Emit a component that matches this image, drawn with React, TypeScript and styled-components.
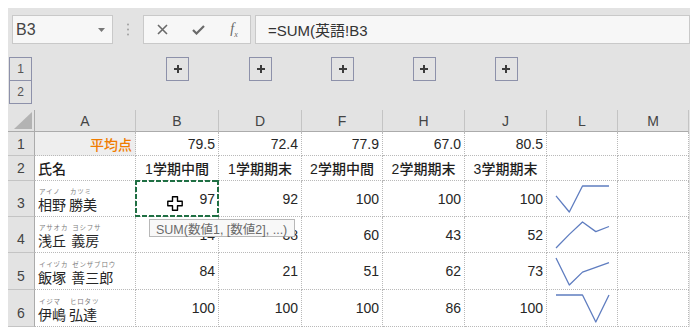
import React from "react";
import styled, { createGlobalStyle } from "styled-components";

const GlobalStyle = createGlobalStyle`
  body {
    margin: 0;
    background: #ffffff;
    font-family: "Liberation Sans", "Noto Sans CJK JP", sans-serif;
  }
`;

const COLS = "27px 101px 83px 83px 81px 82px 82px 71px 71px";
const ROWS = [36, 36, 37, 37];

const rows = [
  { n: 3, ruby: ["アイノ", "カツミ"], name: ["相野", "勝美"], v: [97, 92, 100, 100, 100] },
  { n: 4, ruby: ["アサオカ", "ヨシフサ"], name: ["浅丘", "義房"], v: [14, 38, 60, 43, 52] },
  { n: 5, ruby: ["イイヅカ", "ゼンザブロウ"], name: ["飯塚", "善三郎"], v: [84, 21, 51, 62, 73] },
  { n: 6, ruby: ["イジマ", "ヒロタツ"], name: ["伊嶋", "弘達"], v: [100, 100, 100, 86, 100] },
];

const Frame = styled.div`
  margin: 8px 0 0 8px;
  width: 682px;
  height: 319px;
  background: #e3e3e3;
  display: flex;
  flex-direction: column;
`;

const Toolbar = styled.div`
  display: flex;
  align-items: center;
  height: 29px;
  margin-top: 7px;
  padding-left: 4px;
`;

const Box = styled.div`
  box-sizing: border-box;
  height: 29px;
  background: #f7f7f7;
  border: 1px solid #c9c9c9;
  display: flex;
  align-items: center;
`;

const NameBox = styled(Box)`
  width: 101px;
  justify-content: space-between;
  padding: 0 7px 0 3px;
  font-size: 16px;
  color: #444;
`;

const Separator = styled.div`
  width: 30px;
  display: flex;
  justify-content: center;
`;

const ButtonBox = styled(Box)`
  width: 108px;
  display: grid;
  grid-template-columns: repeat(3, 36px);
  justify-items: center;
  color: #6a6a6a;
`;

const Fx = styled.span`
  font-family: "Liberation Serif", serif;
  font-style: italic;
  font-size: 14px;
  color: #666;
  sub {
    font-size: 8px;
  }
`;

const FormulaBox = styled(Box)`
  flex: 1;
  margin-left: 4px;
  padding-left: 12px;
  font-size: 15px;
  color: #333;
`;

const OutlineRow = styled.div`
  display: grid;
  grid-template-columns: ${COLS};
  grid-template-rows: 47px;
  margin-top: 13px;
`;

const LevelStack = styled.div`
  display: flex;
  flex-direction: column;
  padding-left: 1px;
`;

const LevelButton = styled.div<{ $first?: boolean }>`
  box-sizing: border-box;
  width: 23px;
  height: 24px;
  margin-top: ${(p) => (p.$first ? "0" : "-1px")};
  border: 1px solid #8d91aa;
  display: flex;
  align-items: center;
  justify-content: center;
  font-size: 12px;
  color: #555;
`;

const PlusButton = styled.div<{ $col: number }>`
  grid-column: ${(p) => p.$col};
  justify-self: center;
  box-sizing: border-box;
  width: 23px;
  height: 24px;
  border: 1px solid #8d91aa;
  display: flex;
  align-items: center;
  justify-content: center;
`;

const Sheet = styled.div`
  display: grid;
  grid-template-columns: ${COLS};
  grid-template-rows: 22px 24px 25px ${ROWS.map((r) => r + "px").join(" ")};
  margin-top: 6px;
  font-size: 14px;
  color: #262626;
`;

const Corner = styled.div`
  box-sizing: border-box;
  border-right: 1px solid #ababab;
  border-bottom: 1px solid #ababab;
  display: flex;
  align-items: flex-end;
  justify-content: flex-end;
  padding: 0 2px 2px 0;
`;

const ColHead = styled.div`
  box-sizing: border-box;
  border-right: 1px solid #c4c4c4;
  border-bottom: 1px solid #ababab;
  display: flex;
  align-items: center;
  justify-content: center;
  color: #444;
`;

const RowHead = styled.div<{ $tall?: boolean }>`
  box-sizing: border-box;
  border-right: 1px solid #ababab;
  border-bottom: 1px solid #c4c4c4;
  display: flex;
  align-items: ${(p) => (p.$tall ? "flex-end" : "center")};
  justify-content: center;
  padding-bottom: ${(p) => (p.$tall ? "5px" : "0")};
  color: #444;
`;

const Cell = styled.div<{ $align?: "left" | "center" | "right"; $fill?: string; $bold?: boolean }>`
  box-sizing: border-box;
  position: relative;
  background: ${(p) => p.$fill || "#ffffff"};
  border-right: 1px dotted #b9b9b9;
  border-bottom: 1px dotted #b9b9b9;
  display: flex;
  align-items: center;
  justify-content: ${(p) =>
    p.$align === "left" ? "flex-start" : p.$align === "center" ? "center" : "flex-end"};
  padding: 0 3px;
  font-weight: ${(p) => (p.$bold ? 500 : 400)};
  color: ${(p) => (p.$bold ? "#1e1e1e" : "inherit")};
  white-space: nowrap;
`;

const AverageLabel = styled(Cell)`
  color: #f07c00;
  font-weight: 500;
`;

const SelectedCell = styled(Cell)`
  z-index: 2;
  &::after {
    content: "";
    position: absolute;
    top: -1px;
    left: -1px;
    right: -1px;
    bottom: -1px;
    background:
      linear-gradient(90deg, #1f6f43 5px, transparent 5px) top left / 7px 2px repeat-x,
      linear-gradient(90deg, #1f6f43 5px, transparent 5px) bottom left / 7px 2px repeat-x,
      linear-gradient(180deg, #1f6f43 5px, transparent 5px) top left / 2px 7px repeat-y,
      linear-gradient(180deg, #1f6f43 5px, transparent 5px) top right / 2px 7px repeat-y;
  }
`;

const Cursor = styled.svg`
  position: absolute;
  left: 31px;
  top: 15px;
`;

const Tooltip = styled.div`
  position: absolute;
  left: 13px;
  top: 38px;
  box-sizing: border-box;
  width: 146px;
  height: 18px;
  background: #f8f8f8;
  border: 1px solid #b8b8b8;
  padding-left: 6px;
  display: flex;
  align-items: center;
  font-size: 12.5px;
  font-weight: 400;
  color: #6a6a6a;
`;

const NameCell = styled(Cell)`
  align-items: flex-end;
  justify-content: flex-start;
  padding-bottom: 2px;
  gap: 3px;
`;

const NamePart = styled.div`
  display: flex;
  flex-direction: column;
`;

const Ruby = styled.span`
  font-size: 6.5px;
  line-height: 8px;
  color: #7c7c7c;
  padding-left: 1px;
  letter-spacing: 0.8px;
`;

const Kanji = styled.span`
  font-size: 14px;
  line-height: 18px;
`;

const SparkCell = styled(Cell)`
  padding: 0;
`;

function Sparkline({ values, h }: { values: number[]; h: number }) {
  const min = Math.min(...values);
  const max = Math.max(...values);
  const top = 5;
  const bottom = h - 5;
  const pts = values
    .map((v, i) => {
      const x = 9 + (i * 53) / (values.length - 1);
      const y = max === min ? top : top + ((max - v) / (max - min)) * (bottom - top);
      return `${x.toFixed(1)},${y.toFixed(1)}`;
    })
    .join(" ");
  return (
    <svg width="70" height={h - 1} viewBox={`0 0 70 ${h - 1}`}>
      <polyline points={pts} fill="none" stroke="#5f7dc0" strokeWidth="1.3" strokeLinejoin="round" />
    </svg>
  );
}

export default function App() {
  const averages = ["79.5", "72.4", "77.9", "67.0", "80.5"];
  const terms = ["1学期中間", "1学期期末", "2学期中間", "2学期期末", "3学期期末"];
  return (
    <>
      <GlobalStyle />
      <Frame>
        <Toolbar>
          <NameBox>
            <span>B3</span>
            <svg width="7" height="4" viewBox="0 0 7 4">
              <path d="M0 0h7L3.5 4z" fill="#777" />
            </svg>
          </NameBox>
          <Separator>
            <svg width="2" height="13" viewBox="0 0 2 13">
              <circle cx="1" cy="1.5" r="0.9" fill="#9a9a9a" />
              <circle cx="1" cy="6.5" r="0.9" fill="#9a9a9a" />
              <circle cx="1" cy="11.5" r="0.9" fill="#9a9a9a" />
            </svg>
          </Separator>
          <ButtonBox>
            <svg width="11" height="11" viewBox="0 0 11 11">
              <path d="M1 1l9 9M10 1l-9 9" stroke="#6a6a6a" strokeWidth="1.6" />
            </svg>
            <svg width="13" height="10" viewBox="0 0 13 10">
              <path d="M1 5l3.5 3.5L12 1" stroke="#6a6a6a" strokeWidth="2.2" fill="none" />
            </svg>
            <Fx>
              f<sub>x</sub>
            </Fx>
          </ButtonBox>
          <FormulaBox>=SUM(英語!B3</FormulaBox>
        </Toolbar>

        <OutlineRow>
          <LevelStack>
            <LevelButton $first>1</LevelButton>
            <LevelButton>2</LevelButton>
          </LevelStack>
          {[3, 4, 5, 6, 7].map((c) => (
            <PlusButton key={c} $col={c}>
              <svg width="8" height="8" viewBox="0 0 8 8">
                <path d="M4 0v8M0 4h8" stroke="#3c3c3c" strokeWidth="2" />
              </svg>
            </PlusButton>
          ))}
        </OutlineRow>

        <Sheet>
          <Corner>
            <svg width="18" height="17" viewBox="0 0 18 17">
              <path d="M18 0v17H0z" fill="#b3b3b3" />
            </svg>
          </Corner>
          {["A", "B", "D", "F", "H", "J", "L", "M"].map((c) => (
            <ColHead key={c}>{c}</ColHead>
          ))}

          <RowHead>1</RowHead>
          <AverageLabel $fill="#eeeeee">平均点</AverageLabel>
          {averages.map((a) => (
            <Cell key={a}>{a}</Cell>
          ))}
          <Cell />
          <Cell />

          <RowHead>2</RowHead>
          <Cell $align="left" $bold>
            氏名
          </Cell>
          {terms.map((t) => (
            <Cell key={t} $align="center" $bold>
              {t}
            </Cell>
          ))}
          <Cell />
          <Cell />

          {rows.map((r, i) => (
            <React.Fragment key={r.n}>
              <RowHead $tall>{r.n}</RowHead>
              <NameCell>
                {r.name.map((part, k) => (
                  <NamePart key={part}>
                    <Ruby>{r.ruby[k]}</Ruby>
                    <Kanji>{part}</Kanji>
                  </NamePart>
                ))}
              </NameCell>
              {r.v.map((v, k) =>
                i === 0 && k === 0 ? (
                  <SelectedCell key={k}>
                    {v}
                    <Cursor width="16" height="15" viewBox="0 0 16 15">
                      <path
                        d="M5.5 0.8h5v4.4h4.7v4.6h-4.7v4.4h-5V9.8H0.8V5.2h4.7z"
                        fill="#ffffff"
                        stroke="#000000"
                        strokeWidth="1.4"
                        strokeLinejoin="round"
                      />
                    </Cursor>
                    <Tooltip>SUM(数値1, [数値2], ...)</Tooltip>
                  </SelectedCell>
                ) : (
                  <Cell key={k}>{v}</Cell>
                )
              )}
              <SparkCell>
                <Sparkline values={r.v} h={ROWS[i]} />
              </SparkCell>
              <Cell />
            </React.Fragment>
          ))}
        </Sheet>
      </Frame>
    </>
  );
}
